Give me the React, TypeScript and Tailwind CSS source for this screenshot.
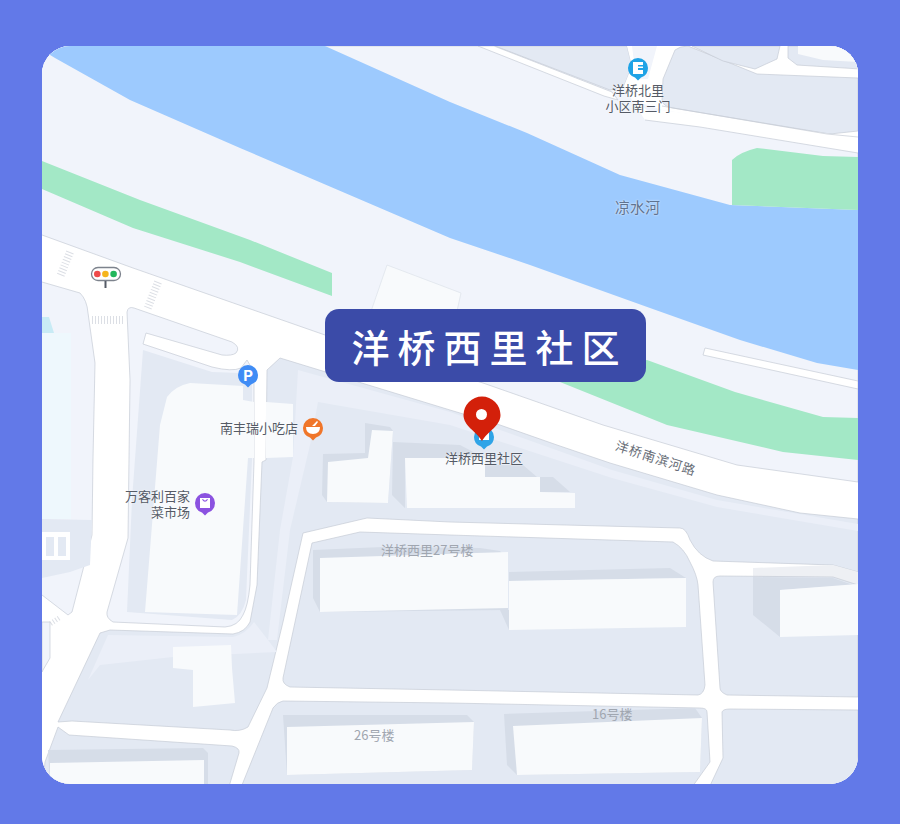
const roadLine = "#c6ccd6";
const land = "#f1f4fb";
const block = "#e3e9f3";
const pale = "#ebeff8";
const shadow = "#d6dde8";
const building = "#f8fafc";

function Block({ d, fill = block }: { d: string; fill?: string }) {
  return <path d={d} fill={fill} stroke={roadLine} strokeWidth="0.7" />;
}

function Marker({ x, y, fill }: { x: number; y: number; fill: string }) {
  return (
    <path
      d={`M${x - 10},${y} a10,10 0 1,1 20,0 a10,10 0 0,1 -7,9.5 l-3,3 l-3,-3 a10,10 0 0,1 -7,-9.5 Z`}
      fill={fill}
    />
  );
}

function MapArt() {
  return (
    <svg className="absolute inset-0 h-full w-full" viewBox="42 46 816 738">
      <rect x="42" y="46" width="816" height="738" fill="#ffffff" />

      {/* north bank */}
      <Block d="M30,46 L858,46 L858,482 L737,465 L603,425 L483,383 L325,335 L133,268 L42,235 L30,232 Z" fill={land} />

      {/* top right blocks and lanes */}
      <Block d="M495,46 L627,46 L632,66 L624,86 L610,90 Z" />
      <path d="M627,46 L860,46 L860,78 L858,140 L662,110 L632,100 L624,86 L632,66 Z" fill="#ffffff" />
      <path d="M632,46 L657,46 L648,79 L636,79 L634,62 Z" fill={land} />
      <Block d="M675,50 Q680,46 688,46 L757,74 L858,78 L858,131 L830,134 L673,108 Q662,106 662,100 L663,79 Z" />
      <Block d="M692,46 L780,46 L777,59 L755,69 L723,61 Z" />
      <Block d="M788,46 L860,46 L860,69 L797,65 L788,58 Z" />
      <path d="M798,46 L860,46 L860,62 L823,60 L798,54 Z" fill={building} />
      <path d="M632,100 L650,112 L662,110 L830,134 L858,137 L858,153 L700,127 L645,120 Z" fill="#ffffff" />
      <path d="M662,106 L673,108 L827,134 L858,137 M645,120 L700,127 L858,153" fill="none" stroke={roadLine} strokeWidth="0.7" />
      <path d="M478,46 L494,46 L612,92 L618,100 L604,96 Z" fill="#ffffff" stroke={roadLine} strokeWidth="0.7" />

      {/* river */}
      <path d="M42,46 L325,46 L450,102 L527,133 L620,175 L730,205 L858,210 L858,370 L817,363 L740,340 L650,308 L530,265 L450,238 L240,148 L130,100 L55,58 L42,50 Z" fill="#9dcafe" />

      {/* green strips */}
      <path d="M42,161 L140,200 L250,240 L332,273 L332,296 L240,262 L133,228 L42,189 Z" fill="#a3e8c6" />
      <path d="M555,380 L647,360 L735,392 L823,417 L858,418 L858,460 L783,452 L667,425 Z" fill="#a3e8c6" />
      <path d="M732,160 Q740,152 757,148 L823,156 L858,157 L858,210 L732,205 Z" fill="#a3e8c6" />

      {/* small things on the north bank */}
      <path d="M387,265 L461,293 L455,320 L368,320 Z" fill={building} stroke="#dde2ea" strokeWidth="0.7" />
      <path d="M705,348 L858,381 L858,389 L703,355 Z" fill="#ffffff" stroke={roadLine} strokeWidth="0.7" />

      {/* crosswalks */}
      <g fill="none" stroke="#dcdfe5" strokeWidth="8" strokeDasharray="1 2">
        <path d="M70,252 L60,277" />
        <path d="M158,282 L147,310" />
        <path d="M92,320 L123,320" />
        <path d="M59,618 L50,624" strokeWidth="5" />
      </g>

      {/* far left block */}
      <Block d="M30,280 L42,282 L80,293 Q87,300 88,313 L95,363 L93,458 L92,535 L72,612 L68,615 L42,595 L30,590 Z" fill={land} />
      <path d="M42,317 L49,317 L54,333 L42,333 Z" fill="#c8ebf5" />
      <path d="M42,333 L71,333 L71,519 L42,519 Z" fill="#eef8fd" />
      <path d="M42,519 L92,520 L90,565 L70,572 L42,578 Z" fill={block} />
      <path d="M42,532 L70,532 L70,560 L42,560 Z M46,537 L46,556 L54,556 L54,537 Z M58,537 L58,556 L66,556 L66,537 Z" fill="#ffffff" fillRule="evenodd" />
      <Block d="M42,622 L50,622 L50,658 L43,670 L42,672 Z" fill={land} />

      {/* market block */}
      <Block d="M127,312 Q128,306 134,308 L232,342 Q241,347 236,353 Q232,356 222,355 L146,333 L143,344 L212,367 Q232,372 241,368 L247,360 L254,372 L254,462 L250,585 Q248,606 243,615 Q238,626 225,627 L113,622 Q106,618 107,612 L128,538 L130,380 Z" fill={land} />
      <path d="M143,350 L212,372 L240,373 L252,378 L252,460 L246,600 Q242,616 232,620 L127,612 L132,500 Z" fill={block} />
      <path d="M167,397 Q175,386 190,383 L243,386 L243,400 L254,402 L254,458 L248,458 L237,615 L145,612 L160,425 Z" fill={building} />

      {/* the big block south of the main road */}
      <Block d="M267,370 L280,358 L450,410 L500,425 L557,445 L610,463 L717,495 L800,513 L858,519 L858,572 L833,565 L713,561 Q698,556 690,540 Q686,528 680,528 L450,522 L367,518 L303,533 L283,622 L267,688 L248,727 Q240,732 230,730 L72,721 L58,722 L100,633 L110,630 L233,634 Q245,632 250,622 L257,585 L262,462 L266,460 Z" />
      <path d="M298,370 L450,412 L612,470 L717,500 L858,524 L858,531 L717,507 L612,478 L450,425 L318,402 L310,445 L290,530 L277,640 L268,640 L280,530 L293,457 L296,405 Z" fill={pale} />
      <path d="M108,635 L233,637 Q246,634 254,622 L268,640 L277,652 L173,657 L100,665 L88,680 Z" fill={pale} />
      <path d="M266,402 L293,404 L293,457 L266,458 Z" fill={building} />
      <path d="M173,647 L231,645 L232,668 L235,703 L193,707 L193,670 L173,668 Z" fill={building} />

      <path d="M323,454 L365,453 L365,423 L390,427 L393,431 L388,503 L327,502 L322,495 Z" fill={shadow} />
      <path d="M328,462 L368,458 L372,430 L393,431 L388,503 L327,502 Z" fill={building} />
      <path d="M393,442 L460,445 L485,458 L405,458 L405,508 L392,495 Z" fill={shadow} />
      <path d="M405,458 L485,458 L485,477 L540,477 L540,492 L575,493 L575,508 L407,508 Z" fill={building} />
      <path d="M485,465 L523,465 L537,477 L485,477 Z" fill={shadow} />
      <path d="M540,477 L553,477 L570,492 L540,492 Z" fill={shadow} />

      {/* 27 building block */}
      <Block d="M312,543 L360,532 L450,535 L673,542 Q684,548 690,562 Q697,575 698,585 L705,685 Q704,694 698,695 L450,690 L290,687 Q282,684 283,678 Z" />
      <path d="M313,550 L383,547 L480,548 L500,551 L508,560 L508,610 L320,612 L313,598 Z" fill={shadow} />
      <path d="M320,558 L508,552 L508,608 L320,612 Z" fill={building} />
      <path d="M509,572 L670,568 L686,578 L509,581 Z" fill={shadow} />
      <path d="M500,610 L509,610 L509,630 Z" fill={shadow} />
      <path d="M509,581 L686,578 L686,627 L509,630 Z" fill={building} />

      {/* right block */}
      <path d="M753,568 L833,565 L858,572 L858,585 L833,577 L753,577 Z" fill="#eef0f4" />
      <Block d="M713,582 Q713,576 720,576 L833,577 L858,585 L858,697 L727,695 Q720,692 720,688 Z" />
      <path d="M753,577 L833,578 L853,585 L780,590 L780,637 L753,615 Z" fill={shadow} />
      <path d="M780,590 L858,584 L858,635 L780,637 Z" fill={building} />

      {/* lower blocks */}
      <Block d="M722,712 Q723,709 730,709 L858,710 L858,790 L708,790 L723,758 Z" />
      <Block d="M273,708 Q277,702 283,701 L450,703 L700,708 Q707,708 707,712 L710,762 L690,790 L240,790 Z" />
      <path d="M283,715 L467,715 L474,722 L472,770 L287,775 Z" fill={shadow} />
      <path d="M287,727 L474,722 L472,770 L287,775 Z" fill={building} />
      <path d="M504,714 L695,708 L702,718 L700,772 L517,775 L507,765 Z" fill={shadow} />
      <path d="M513,726 L702,718 L700,772 L517,775 Z" fill={building} />
      <Block d="M45,762 L58,727 L69,735 L232,746 Q240,748 239,753 L228,790 L42,790 Z" />
      <path d="M48,750 L203,748 L208,753 L208,784 L50,784 Z" fill={shadow} />
      <path d="M50,763 L204,760 L204,784 L50,784 Z" fill={building} />

      {/* traffic light */}
      <rect x="91.500" y="267.500" width="29" height="13" rx="6.500" fill="#ffffff" stroke="#7d838d" strokeWidth="1.300" />
      <circle cx="97.300" cy="274" r="3.300" fill="#ef4a4a" />
      <circle cx="105.400" cy="274" r="3.300" fill="#f5b51e" />
      <circle cx="113.600" cy="274" r="3.300" fill="#22b75c" />
      <path d="M105.500,281 V288" stroke="#555b66" strokeWidth="2" />

      {/* parking */}
      <Marker x={248} y={375} fill="#3f8cf5" />
      <text x="248" y="381" textAnchor="middle" fontSize="15" fontWeight="700" fill="#ffffff" fontFamily="Inter, sans-serif">
        P
      </text>

      {/* gate marker */}
      <Marker x={638} y={68} fill="#1fa3e6" />
      <path d="M633,62 H643 V65 H638 V66.500 H643 V68 H638 V70 H643 V74 H633 Z" fill="#ffffff" />

      {/* food marker */}
      <Marker x={313} y={428} fill="#f0762a" />
      <path d="M306,427 H320 Q320,434 313,434 Q306,434 306,427 Z M312,426 L317,421 L318,422 L315,426 Z" fill="#ffffff" />

      {/* market marker */}
      <Marker x={205} y={503} fill="#8b52e0" />
      <path d="M200,498 H210 V508 H200 Z M202,499.500 Q205,504 208,499.500 L207,499 Q205,502 203,499 Z" fill="#ffffff" fillRule="evenodd" />

      {/* community marker under the pin */}
      <Marker x={484} y={437} fill="#2fa4e7" />
      <rect x="479" y="432" width="10" height="8" fill="#ffffff" />

      {/* pin */}
      <path
        d="M482,441 C476,431 463.500,426 463.500,415 A18.500,18.500 0 0,1 500.500,415 C500.500,426 488,431 482,441 Z"
        fill="#d3200a"
      />
      <circle cx="481.500" cy="414.500" r="5.500" fill="#ffffff" />
    </svg>
  );
}

export default function App() {
  return (
    <div className="h-[824px] w-full bg-[#6279e8] pl-[42px] pt-[46px] [font-family:'Noto_Sans_CJK_SC','Noto_Sans',sans-serif]">
      <div className="relative h-[738px] w-[816px] overflow-hidden rounded-[28px] bg-white">
        <MapArt />

        <div className="absolute left-[546px] top-[36px] w-[100px] text-center text-[13px] leading-[16px] text-[#555b66] [text-shadow:0_0_2px_#ffffff]">
          洋桥北里
          <br />
          小区南三门
        </div>
        <div className="absolute left-[573px] top-[150px] text-[15px] leading-[22px] text-[#5f7390] [text-shadow:0_0_2px_#ffffff]">
          凉水河
        </div>
        <div className="absolute left-[178px] top-[374px] text-[13px] leading-[16px] text-[#555b66] [text-shadow:0_0_2px_#ffffff]">
          南丰瑞小吃店
        </div>
        <div className="absolute left-[48px] top-[442px] w-[100px] text-right text-[13px] leading-[16px] text-[#555b66] [text-shadow:0_0_2px_#ffffff]">
          万客利百家
          <br />
          菜市场
        </div>
        <div className="absolute left-[403px] top-[404px] text-[13px] leading-[16px] text-[#555b66] [text-shadow:0_0_2px_#ffffff]">
          洋桥西里社区
        </div>
        <div className="absolute left-[572px] top-[404px] rotate-[18deg] text-[13px] leading-[16px] tracking-[1px] text-[#666c76] [text-shadow:0_0_2px_#ffffff]">
          洋桥南滨河路
        </div>
        <div className="absolute left-[339px] top-[496px] text-[13px] leading-[16px] text-[#a0a6b0]">
          洋桥西里27号楼
        </div>
        <div className="absolute left-[312px] top-[681px] text-[13px] leading-[16px] text-[#a0a6b0]">
          26号楼
        </div>
        <div className="absolute left-[550px] top-[660px] text-[13px] leading-[16px] text-[#a0a6b0]">
          16号楼
        </div>

        <div className="absolute left-[283px] top-[263px] flex h-[73px] w-[321px] items-center justify-center rounded-[14px] bg-[#3b4ba8] pl-[8px] text-[38px] font-medium tracking-[8px] text-white">
          洋桥西里社区
        </div>
      </div>
    </div>
  );
}
